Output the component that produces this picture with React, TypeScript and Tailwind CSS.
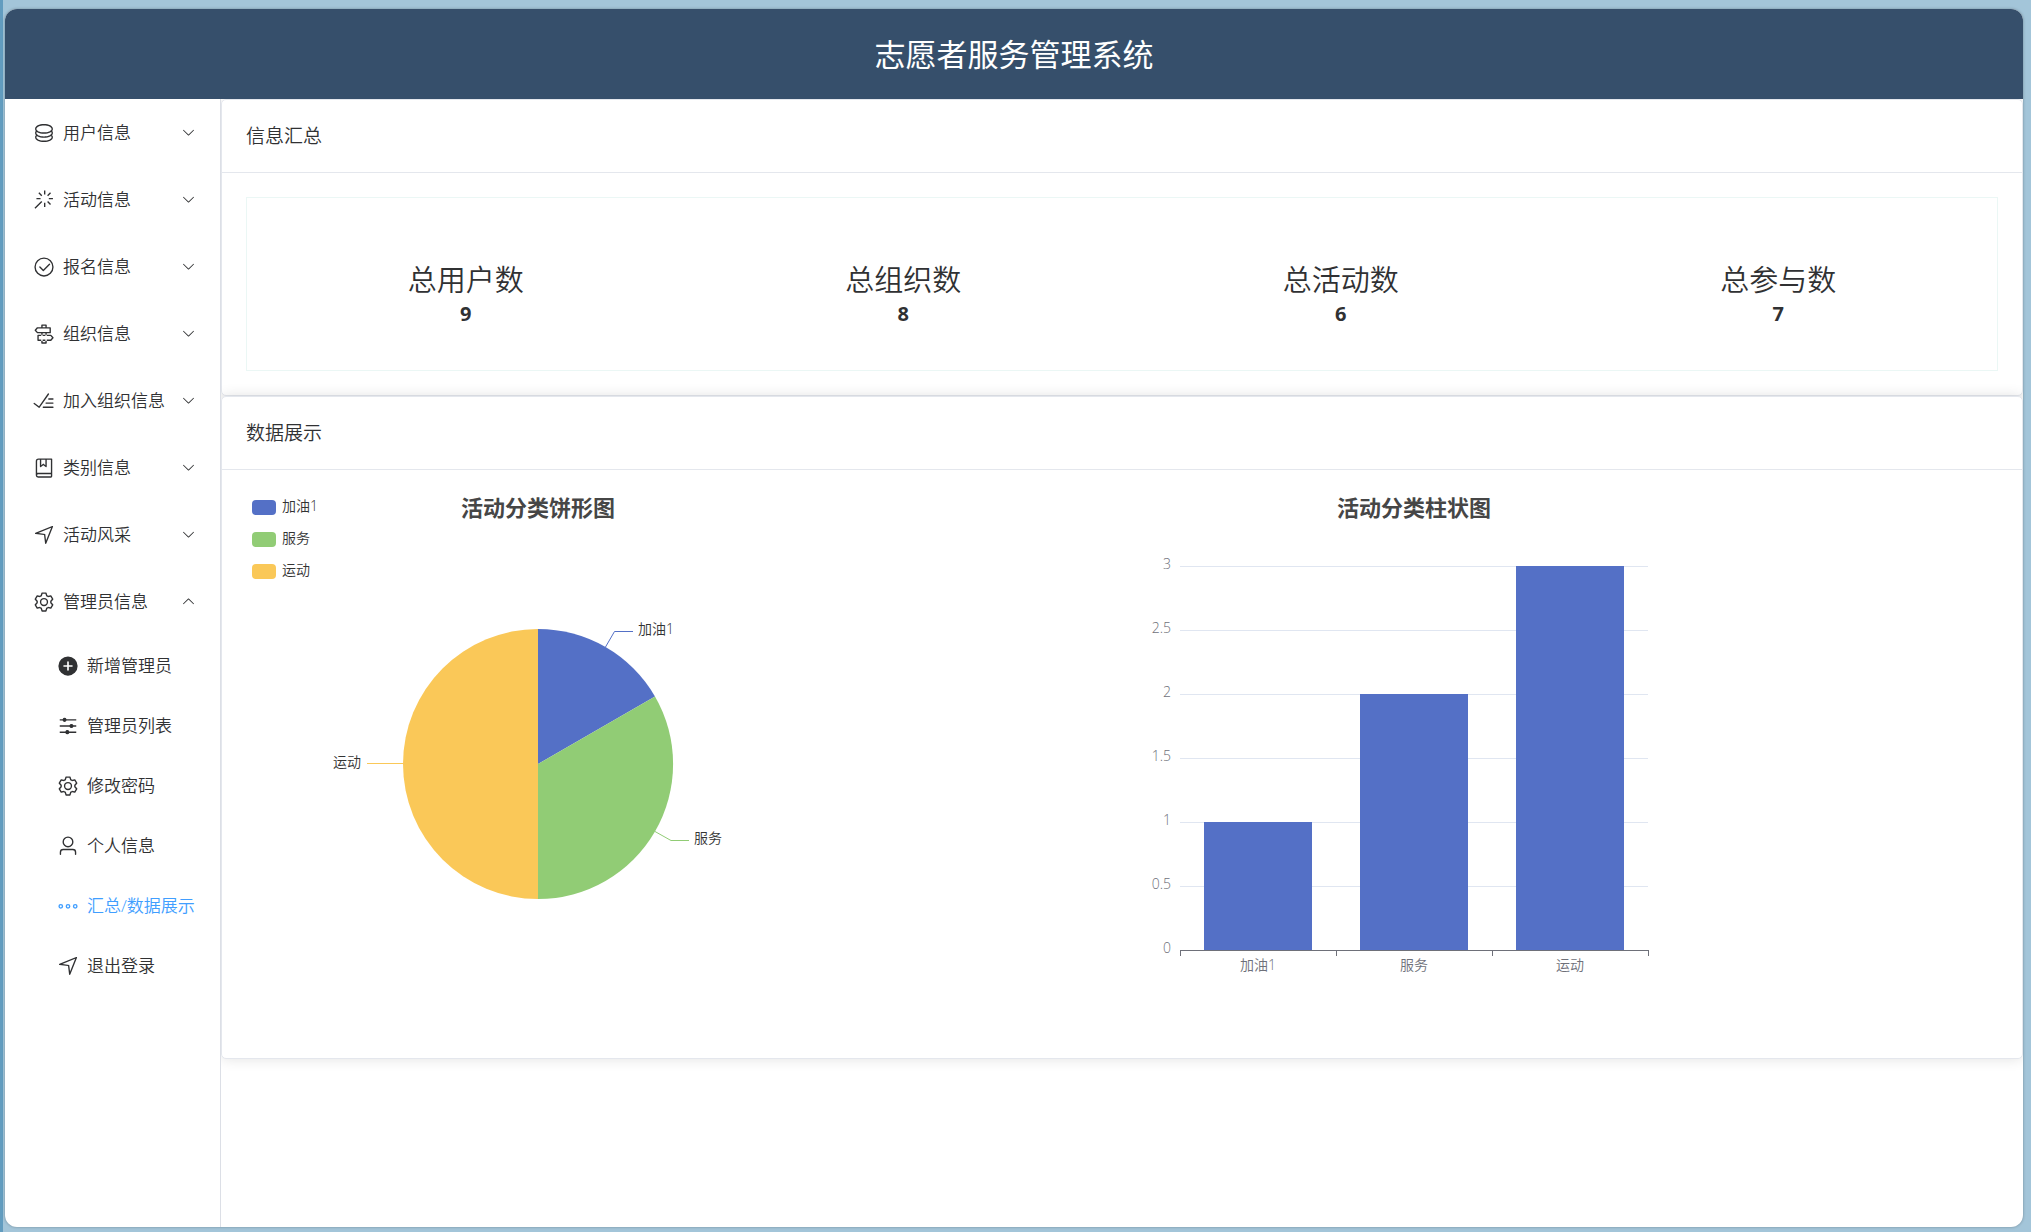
import React, { useState } from 'react';

const FONT = "font-['Open_Sans','Noto_Sans_CJK_SC',sans-serif]";

const ICONS = {
  coin: 'm161.92 580.736 29.888 58.88C171.328 659.776 160 681.728 160 704c0 82.304 155.328 160 352 160s352-77.696 352-160c0-22.272-11.392-44.16-31.808-64.32l30.464-58.432C903.936 615.808 928 657.664 928 704c0 129.728-188.544 224-416 224S96 833.728 96 704c0-46.592 24.32-88.576 65.92-123.264zM161.92 388.736l29.888 58.88C171.328 467.84 160 489.792 160 512c0 82.304 155.328 160 352 160s352-77.696 352-160c0-22.272-11.392-44.16-31.808-64.32l30.464-58.432C903.936 423.808 928 465.664 928 512c0 129.728-188.544 224-416 224S96 641.728 96 512c0-46.592 24.32-88.576 65.92-123.264zM512 544c-227.456 0-416-94.272-416-224S284.544 96 512 96s416 94.272 416 224-188.544 224-416 224zm0-64c196.672 0 352-77.696 352-160S708.672 160 512 160s-352 77.696-352 160 155.328 160 352 160z',
  magic: 'M512 64h64v192h-64V64zm0 576h64v192h-64V640zM160 480v-64h192v64H160zm576 0v-64h192v64H736zM249.856 199.04l45.248-45.184L430.848 289.6 385.6 334.848 249.856 199.104zM657.152 606.4l45.248-45.248 135.744 135.744-45.248 45.248L657.152 606.4zM114.048 923.2 68.8 877.952l316.8-316.8 45.248 45.248-316.8 316.8zM702.4 334.848 657.152 289.6l135.744-135.744 45.248 45.248L702.4 334.848z',
  check: 'M512 896a384 384 0 1 0 0-768 384 384 0 0 0 0 768zm0 64a448 448 0 1 1 0-896 448 448 0 0 1 0 896zM745.344 361.344a32 32 0 0 1 45.312 45.312l-288 288a32 32 0 0 1-45.312 0l-160-160a32 32 0 1 1 45.312-45.312L480 626.752l265.344-265.408z',
  guide: 'M640 608h-64V416h64v192zm0 160v160a32 32 0 0 1-32 32H416a32 32 0 0 1-32-32V768h64v128h128V768h64zM384 608V416h64v192h-64zm256-352h-64V128H448v128h-64V96a32 32 0 0 1 32-32h192a32 32 0 0 1 32 32v160zM220.8 256l-71.232 80 71.168 80H768V256H220.8zm-14.4-64H800a32 32 0 0 1 32 32v224a32 32 0 0 1-32 32H206.4a32 32 0 0 1-23.936-10.752l-99.584-112a32 32 0 0 1 0-42.496l99.584-112A32 32 0 0 1 206.4 192zm678.784 496-71.104 80H266.816V608h547.2l71.168 80zm-56.768-144H234.88a32 32 0 0 0-32 32v224a32 32 0 0 0 32 32h593.6a32 32 0 0 0 23.936-10.752l99.584-112a32 32 0 0 0 0-42.496l-99.584-112A32 32 0 0 0 828.48 544z',
  finished: 'M280.768 753.728 691.456 167.04a32 32 0 1 1 52.416 36.672L314.24 817.472a32 32 0 0 1-45.44 7.296l-230.4-172.8a32 32 0 0 1 38.4-51.2l203.968 152.96zM736 448a32 32 0 1 1 0-64h192a32 32 0 1 1 0 64H736zM608 640a32 32 0 0 1 0-64h319.936a32 32 0 1 1 0 64H608zM480 832a32 32 0 1 1 0-64h447.936a32 32 0 1 1 0 64H480z',
  collection: 'M192 736h640V128H256a64 64 0 0 0-64 64v544zm64-672h608a32 32 0 0 1 32 32v672a32 32 0 0 1-32 32H160l-32 57.536V192A128 128 0 0 1 256 64zM240 800a48 48 0 1 0 0 96h592v-96H240zm0-64h656v160a64 64 0 0 1-64 64H240a112 112 0 0 1 0-224zm144-608v250.88l96-76.8 96 76.8V128H384zm-64-64h320v381.44a32 32 0 0 1-51.968 24.96L480 384l-108.032 86.4A32 32 0 0 1 320 445.44V64z',
  position: 'm249.6 417.088 319.744 43.072 39.168 310.272L845.12 178.88 249.6 417.088zm-129.024 47.168a32 32 0 0 1-7.68-61.44l777.792-311.04a32 32 0 0 1 41.6 41.6l-310.72 775.68a32 32 0 0 1-61.44-7.808L512 516.992l-391.424-52.736z',
  setting: 'M600.704 64a32 32 0 0 1 30.464 22.208l35.2 109.376c14.784 7.232 28.928 15.36 42.432 24.512l112.384-24.192a32 32 0 0 1 34.432 15.36L944.32 364.8a32 32 0 0 1-4.032 37.504l-77.12 85.12a357.12 357.12 0 0 1 0 49.024l77.12 85.248a32 32 0 0 1 4.032 37.504l-88.704 153.6a32 32 0 0 1-34.432 15.296L708.8 803.904c-13.44 9.088-27.648 17.28-42.368 24.512l-35.264 109.376A32 32 0 0 1 600.704 960H423.296a32 32 0 0 1-30.464-22.208L357.696 828.48a351.616 351.616 0 0 1-42.56-24.64l-112.32 24.256a32 32 0 0 1-34.432-15.36L79.68 659.2a32 32 0 0 1 4.032-37.504l77.12-85.248a357.12 357.12 0 0 1 0-48.896l-77.12-85.248A32 32 0 0 1 79.68 364.8l88.704-153.6a32 32 0 0 1 34.432-15.296l112.32 24.256c13.568-9.152 27.776-17.408 42.56-24.64l35.2-109.312A32 32 0 0 1 423.232 64H600.64zm-23.424 64H446.72l-36.352 113.088-24.512 11.968a294.113 294.113 0 0 0-34.816 20.096l-22.656 15.36-116.224-25.088-65.28 113.152 79.68 88.192-1.92 27.136a293.12 293.12 0 0 0 0 40.192l1.92 27.136-79.808 88.192 65.344 113.152 116.224-25.024 22.656 15.296a294.113 294.113 0 0 0 34.816 20.096l24.512 11.968L446.72 896h130.688l36.48-113.152 24.448-11.904a288.282 288.282 0 0 0 34.752-20.096l22.592-15.296 116.288 25.024 65.28-113.152-79.744-88.192 1.92-27.136a293.12 293.12 0 0 0 0-40.256l-1.92-27.136 79.808-88.128-65.344-113.152-116.288 24.96-22.592-15.232a287.616 287.616 0 0 0-34.752-20.096l-24.448-11.904L577.344 128zM512 320a192 192 0 1 1 0 384 192 192 0 0 1 0-384zm0 64a128 128 0 1 0 0 256 128 128 0 0 0 0-256z',
  plus: 'M512 64a448 448 0 1 1 0 896 448 448 0 0 1 0-896zm-38.4 409.6H326.4a38.4 38.4 0 1 0 0 76.8h147.2v147.2a38.4 38.4 0 0 0 76.8 0V550.4h147.2a38.4 38.4 0 0 0 0-76.8H550.4V326.4a38.4 38.4 0 1 0-76.8 0v147.2z',
  operation: 'M389.44 768a96.064 96.064 0 0 1 181.12 0H896v64H570.56a96.064 96.064 0 0 1-181.12 0H128v-64h261.44zm192-288a96.064 96.064 0 0 1 181.12 0H896v64H762.56a96.064 96.064 0 0 1-181.12 0H128v-64h453.44zm-320-288a96.064 96.064 0 0 1 181.12 0H896v64H442.56a96.064 96.064 0 0 1-181.12 0H128v-64h133.44z',
  user: 'M512 512a192 192 0 1 0 0-384 192 192 0 0 0 0 384zm0 64a256 256 0 1 1 0-512 256 256 0 0 1 0 512zm320 320v-96a96 96 0 0 0-96-96H288a96 96 0 0 0-96 96v96a32 32 0 1 1-64 0v-96a160 160 0 0 1 160-160h448a160 160 0 0 1 160 160v96a32 32 0 1 1-64 0z',
  more: 'M176 416a112 112 0 1 0 0 224 112 112 0 0 0 0-224m0 64a48 48 0 1 1 0 96 48 48 0 0 1 0-96zm336-64a112 112 0 1 1 0 224 112 112 0 0 1 0-224zm0 64a48 48 0 1 0 0 96 48 48 0 0 0 0-96zm336-64a112 112 0 1 1 0 224 112 112 0 0 1 0-224zm0 64a48 48 0 1 0 0 96 48 48 0 0 0 0-96z',
  arrow: 'M831.872 340.864 512 652.672 192.128 340.864a30.592 30.592 0 0 0-42.752 0 29.12 29.12 0 0 0 0 41.6L489.664 714.24a32 32 0 0 0 44.672 0l340.288-331.712a29.12 29.12 0 0 0 0-41.728 30.592 30.592 0 0 0-42.752 0z',
};

type IconName = keyof typeof ICONS;

function Icon({ name, className = 'size-[22px]' }: { name: IconName; className?: string }) {
  return (
    <svg viewBox="0 0 1024 1024" fill="currentColor" aria-hidden="true" className={className}>
      <path d={ICONS[name]} />
    </svg>
  );
}

const MENU: { icon: IconName; label: string }[] = [
  { icon: 'coin', label: '用户信息' },
  { icon: 'magic', label: '活动信息' },
  { icon: 'check', label: '报名信息' },
  { icon: 'guide', label: '组织信息' },
  { icon: 'finished', label: '加入组织信息' },
  { icon: 'collection', label: '类别信息' },
  { icon: 'position', label: '活动风采' },
  { icon: 'setting', label: '管理员信息' },
];

const SUBMENU: { icon: IconName; label: string }[] = [
  { icon: 'plus', label: '新增管理员' },
  { icon: 'operation', label: '管理员列表' },
  { icon: 'setting', label: '修改密码' },
  { icon: 'user', label: '个人信息' },
  { icon: 'more', label: '汇总/数据展示' },
  { icon: 'position', label: '退出登录' },
];

const STATS = [
  { label: '总用户数', value: 9 },
  { label: '总组织数', value: 8 },
  { label: '总活动数', value: 6 },
  { label: '总参与数', value: 7 },
];

const DATA = [
  { name: '加油1', value: 1, color: '#5470c6' },
  { name: '服务', value: 2, color: '#91cc75' },
  { name: '运动', value: 3, color: '#fac858' },
];

function Sidebar() {
  const [active, setActive] = useState('汇总/数据展示');
  return (
    <nav className="w-[216px] shrink-0 border-r border-[#dcdfe6] text-[17px] text-[#303133]">
      <ul>
        {MENU.map((item) => {
          const open = item.label === '管理员信息';
          return (
            <li key={item.label}>
              <button
                type="button"
                aria-expanded={open}
                className="flex h-[67px] w-full cursor-pointer items-center pr-6 pl-6 text-left whitespace-nowrap"
              >
                <span className="mr-[5px] flex w-[29px] shrink-0 justify-center">
                  <Icon name={item.icon} />
                </span>
                {item.label}
                <Icon name="arrow" className={open ? 'ml-auto size-[15px] rotate-180' : 'ml-auto size-[15px]'} />
              </button>
              {open && (
                <ul className="pt-px">
                  {SUBMENU.map((sub) => (
                    <li key={sub.label}>
                      <a
                        href="#"
                        onClick={() => setActive(sub.label)}
                        className={
                          sub.label === active
                            ? 'flex h-[60px] items-center pl-12 whitespace-nowrap text-[#409eff]'
                            : 'flex h-[60px] items-center pl-12 whitespace-nowrap'
                        }
                      >
                        <span className="mr-[5px] flex w-[29px] shrink-0 justify-center">
                          <Icon name={sub.icon} />
                        </span>
                        {sub.label}
                      </a>
                    </li>
                  ))}
                </ul>
              )}
            </li>
          );
        })}
      </ul>
    </nav>
  );
}

function Card({ title, children }: { title: string; children: React.ReactNode }) {
  return (
    <section className="rounded-[5px] border border-[#e4e7ed] bg-white shadow-[0_0_14px_rgba(0,0,0,0.12)]">
      <h2 className="border-b border-[#e4e7ed] px-6 py-[22px] text-[19px] leading-7">{title}</h2>
      <div className="p-6">{children}</div>
    </section>
  );
}

function PieChart() {
  return (
    <svg width="585" height="540" role="img" aria-label="活动分类饼形图" className="shrink-0 overflow-visible text-sm" fill="#333">
      {DATA.map((d, i) => (
        <g key={d.name}>
          <rect x="6" y={6 + i * 32} width="24" height="15" rx="4" fill={d.color} />
          <text x="36" y={17 + i * 32}>{d.name}</text>
        </g>
      ))}
      <text x="292" y="22" textAnchor="middle" fill="#464646" className="text-[22px] font-bold">活动分类饼形图</text>
      <path d="M292 270V135A135 135 0 0 1 409 202.5Z" fill="#5470c6" />
      <path d="M292 270L409 202.5A135 135 0 0 1 292 405Z" fill="#91cc75" />
      <path d="M292 270V405A135 135 0 0 1 292 135Z" fill="#fac858" />
      <path d="M359.500 153L368.500 137.500H387" fill="none" stroke="#5470c6" />
      <path d="M409 337.500L425 346.500H443" fill="none" stroke="#91cc75" />
      <path d="M157 269.500H121" fill="none" stroke="#fac858" />
      <text x="392" y="140">加油1</text>
      <text x="448" y="349">服务</text>
      <text x="115" y="273" textAnchor="end">运动</text>
    </svg>
  );
}

function BarChart() {
  const ticks = [0, 0.5, 1, 1.5, 2, 2.5, 3];
  return (
    <svg width="585" height="540" role="img" aria-label="活动分类柱状图" className="shrink-0 overflow-visible text-sm" fill="#6e7079">
      <text x="292" y="22" textAnchor="middle" fill="#464646" className="text-[22px] font-bold">活动分类柱状图</text>
      {ticks.map((t) => (
        <g key={t}>
          {t > 0 && <path d={`M58 ${456.5 - t * 128}H526`} stroke="#e0e6f1" />}
          <text x="49" y={459 - t * 128} textAnchor="end">{t}</text>
        </g>
      ))}
      {DATA.map((d, i) => (
        <g key={d.name}>
          <rect x={82 + i * 156} y={456 - d.value * 128} width="108" height={d.value * 128} fill="#5470c6" />
          <text x={136 + i * 156} y="476" textAnchor="middle">{d.name}</text>
        </g>
      ))}
      <path d="M58 456.500H527M58.500 457V462M214.500 457V462M370.500 457V462M526.500 457V462" stroke="#6e7079" fill="none" />
    </svg>
  );
}

export default function App() {
  return (
    <div className={`flex min-h-screen flex-col border-l-[3px] border-[#629cbf] bg-[#a3c5d9] pt-[9px] pr-2 pb-[5px] pl-0.5 font-[350] text-[#303133] ${FONT}`}>
      <div className="flex flex-1 flex-col overflow-hidden rounded-xl bg-white shadow-[0_0_3px_rgba(0,0,0,0.3)]">
        <header className="flex h-[90px] items-center justify-center bg-[#364f6b] text-white">
          <h1 className="text-[31px] leading-10 font-normal">志愿者服务管理系统</h1>
        </header>
        <div className="flex flex-1">
          <Sidebar />
          <main className="min-w-0 flex-1 overflow-hidden">
            <Card title="信息汇总">
              <dl className="grid grid-cols-4 border border-[#ebf7f5] pt-16 pb-10 text-center">
                {STATS.map((s) => (
                  <div key={s.label}>
                    <dt className="text-[29px] leading-9">{s.label}</dt>
                    <dd className="text-xl leading-8 font-bold">{s.value}</dd>
                  </div>
                ))}
              </dl>
            </Card>
            <Card title="数据展示">
              <div className="grid grid-cols-2">
                <PieChart />
                <BarChart />
              </div>
            </Card>
          </main>
        </div>
      </div>
    </div>
  );
}
